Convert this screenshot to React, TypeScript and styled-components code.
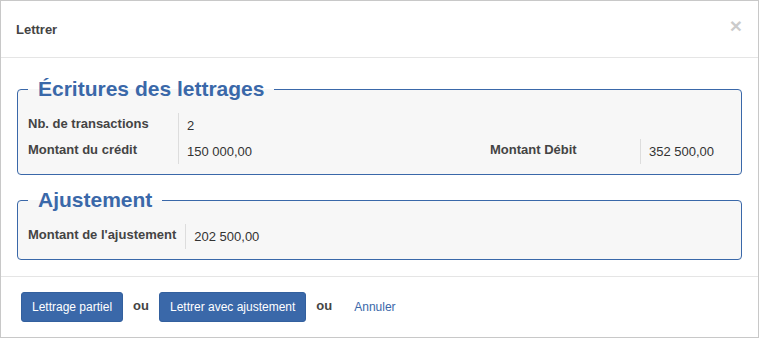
import React from "react";
import styled, {createGlobalStyle} from "styled-components";

let Global = createGlobalStyle`
    body {
        margin: 0;
        background: #fff;
        font-family: "Liberation Sans", Arial, sans-serif;
    }
`;

let Modal = styled.div`
    width: 759px;
    box-sizing: border-box;
    border: 1px solid #c8c8c8;
    background: #fff;
`;
let Header = styled.div`
    height: 56px;
    display: flex;
    align-items: center;
    justify-content: space-between;
    padding: 0 16px 0 15px;
    border-bottom: 1px solid #e5e5e5;
`;
let Title = styled.h4`
    margin: 0;
    font-size: 13px;
    font-weight: bold;
    color: #444;
`;
let Close = styled.button`
    border: 0;
    background: none;
    padding: 0;
    margin-top: -8px;
    font-family: "Liberation Sans", Arial, sans-serif;
    font-size: 21px;
    font-weight: bold;
    line-height: 1;
    color: #000;
    opacity: .2;
    cursor: pointer;
`;
let Body = styled.div`
    padding: 19px 16px 16px;
    display: flex;
    flex-direction: column;
    gap: 13px;
    border-bottom: 1px solid #e5e5e5;
`;
let Fieldset = styled.fieldset`
    margin: 0;
    padding: 12px 10px 10px;
    border: 1px solid #3a68a9;
    border-radius: 4px;
    background: #f7f7f7;
    min-width: 0;
`;
let Legend = styled.legend`
    padding: 0 10px;
    font-size: 21px;
    line-height: 24px;
    font-weight: bold;
    color: #3a68a9;
`;
let Row = styled.div<{h?: number}>`
    display: flex;
    justify-content: space-between;
    height: ${p => p.h ?? 25.5}px;
`;
let Pair = styled.div`
    display: flex;
`;
let Label = styled.div`
    min-width: 150px;
    box-sizing: border-box;
    padding: 2px 9px 0 0;
    font-size: 13px;
    line-height: 18px;
    font-weight: bold;
    color: #444;
    white-space: nowrap;
`;
let Value = styled.div<{w?: number}>`
    border-left: 1px solid #ddd;
    padding: 4px 0 0 8px;
    font-size: 13px;
    line-height: 18px;
    color: #333;
    white-space: nowrap;
    ${p => p.w ? `width:${p.w}px;` : ""}
`;
let Footer = styled.div`
    display: flex;
    align-items: center;
    padding: 15px 20px;
`;
let Button = styled.button`
    height: 30px;
    padding: 0 10px;
    border: 1px solid #33609e;
    border-radius: 3px;
    background: #3a68a9;
    color: #fff;
    font-family: "Liberation Sans", Arial, sans-serif;
    font-size: 12px;
    cursor: pointer;
`;
let Or = styled.span`
    margin: 0 10px 4px;
    font-size: 13px;
    font-weight: bold;
    color: #444;
`;
let LinkButton = styled.a`
    padding: 0 12px;
    font-size: 12px;
    color: #3a68a9;
    text-decoration: none;
    cursor: pointer;
`;

export default function App(): JSX.Element {
    return (<>
        <Global/>
        <Modal>
            <Header>
                <Title>Lettrer</Title>
                <Close aria-label="Fermer">×</Close>
            </Header>
            <Body>
                <Fieldset>
                    <Legend>Écritures des lettrages</Legend>
                    <Row>
                        <Pair><Label>Nb. de transactions</Label><Value>2</Value></Pair>
                    </Row>
                    <Row>
                        <Pair><Label>Montant du crédit</Label><Value>150 000,00</Value></Pair>
                        <Pair><Label>Montant Débit</Label><Value w={82}>352 500,00</Value></Pair>
                    </Row>
                </Fieldset>
                <Fieldset>
                    <Legend>Ajustement</Legend>
                    <Row h={25}>
                        <Pair><Label>Montant de l'ajustement</Label><Value>202 500,00</Value></Pair>
                    </Row>
                </Fieldset>
            </Body>
            <Footer>
                <Button>Lettrage partiel</Button>
                <Or>ou</Or>
                <Button>Lettrer avec ajustement</Button>
                <Or>ou</Or>
                <LinkButton>Annuler</LinkButton>
            </Footer>
        </Modal>
    </>);
}
